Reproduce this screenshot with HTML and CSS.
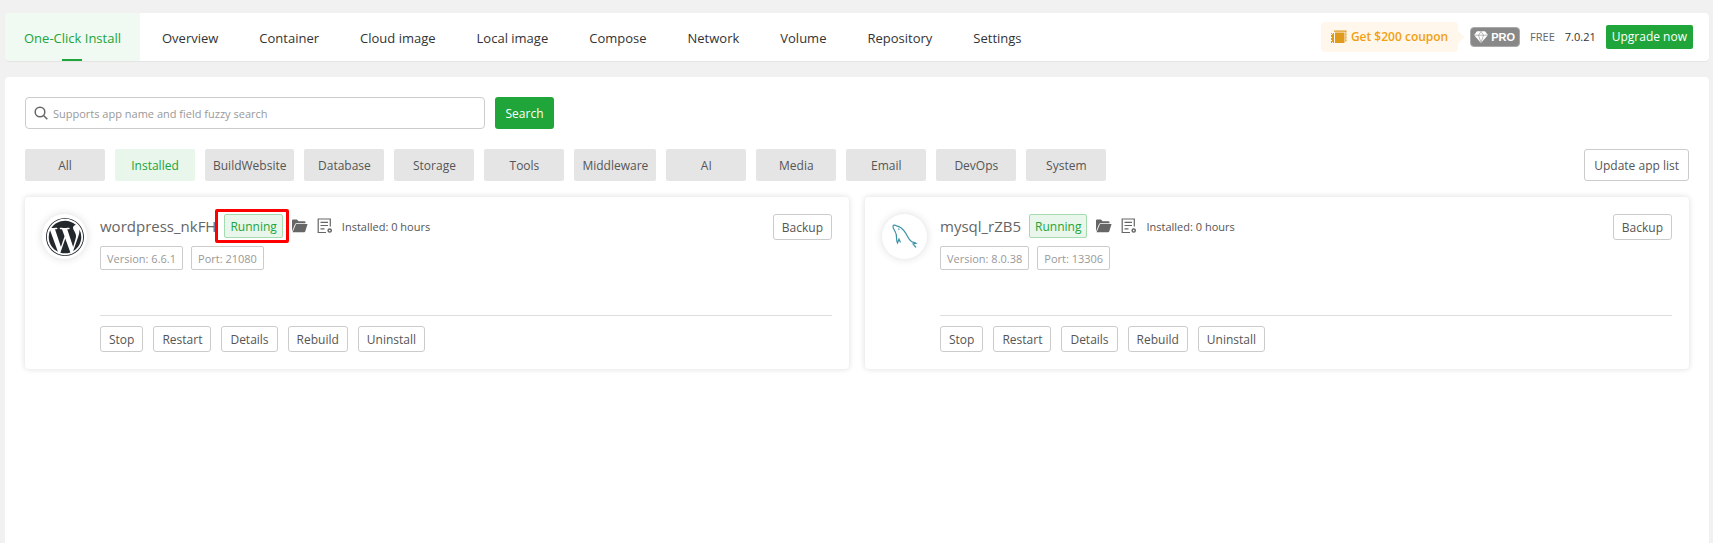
FILE: index.html
```html
<!DOCTYPE html>
<html lang="en">
<head>
<meta charset="utf-8">
<title>One-Click Install</title>
<link rel="stylesheet" href="styles.css">
</head>
<body>
<svg class="sprite" aria-hidden="true">
  <symbol id="folder" viewBox="0 0 16 14">
    <path d="M0 1.500Q0 .5 1 .5h4l1.500 1.800H12.500q1 0 1 1V4.300H3.800L0 10z"/>
    <path d="M4 5H15.600L13.200 12.600Q12.900 13.300 12.200 13.300H.6z"/>
    <path d="M0 8v4.500l2.500-6z"/>
  </symbol>
  <symbol id="log" viewBox="0 0 16 16">
    <path d="M13.300 8.500V1H1.200v13.500H9M3.500 4.300h7.500M3.500 7.500h7.500M3.500 10.800h4" fill="none" stroke="currentColor" stroke-width="1.200"/>
    <circle cx="12.700" cy="12.500" r="1.600" fill="none" stroke="currentColor" stroke-width="1.500"/>
  </symbol>
</svg>
<header class="topbar">
  <nav class="tabs">
    <a class="tab tab-active" href="#">One-Click Install</a>
    <a class="tab" href="#">Overview</a>
    <a class="tab" href="#">Container</a>
    <a class="tab" href="#">Cloud image</a>
    <a class="tab" href="#">Local image</a>
    <a class="tab" href="#">Compose</a>
    <a class="tab" href="#">Network</a>
    <a class="tab" href="#">Volume</a>
    <a class="tab" href="#">Repository</a>
    <a class="tab" href="#">Settings</a>
  </nav>
  <div class="account">
    <a class="coupon" href="#">
      <svg width="16" height="14" viewBox="0 0 16 14" fill="#e09a1c" aria-hidden="true">
        <path d="M4 2.500h9.500V13H4zM0 3h1v1h1V3h1v10H2v-1H1v1H0v-2h1v-1H0V8h1V7H0V5h1V4H0z"/>
        <path d="M3 .5h12.500v2h-.8v1h.8v2h-.8v1h.8v2h-.8v1h.8v2h-1.200V1.700H3z"/>
      </svg>
      Get $200 coupon
    </a>
    <span class="pro">
      <svg width="14" height="12" viewBox="0 0 14 12" aria-hidden="true">
        <path d="M3 .3h8L14 4 7 12 0 4z" fill="#fff"/>
        <path d="M0 4.200h14M4.500 4.200L7 11.500l2.500-7.300M4.500 4.200L7 .5l2.500 3.700" fill="none" stroke="#888" stroke-width=".6"/>
      </svg>
      PRO
    </span>
    <span class="plan">FREE</span>
    <span class="version">7.0.21</span>
    <button class="upgrade" type="button">Upgrade now</button>
  </div>
</header>
<main class="panel">
  <form class="search">
    <label class="search-box">
      <svg width="14" height="14" viewBox="0 0 14 14" fill="none" stroke="#666" stroke-width="1.500" aria-hidden="true"><circle cx="6" cy="6" r="4.800"/><path d="M9.500 9.500L13.300 13.300"/></svg>
      <input type="text" aria-label="Search apps" placeholder="Supports app name and field fuzzy search">
    </label>
    <button class="search-button" type="button">Search</button>
  </form>
  <div class="filters">
    <div class="categories">
      <button class="category" type="button">All</button>
      <button class="category category-active" type="button">Installed</button>
      <button class="category" type="button">BuildWebsite</button>
      <button class="category" type="button">Database</button>
      <button class="category" type="button">Storage</button>
      <button class="category" type="button">Tools</button>
      <button class="category" type="button">Middleware</button>
      <button class="category" type="button">AI</button>
      <button class="category" type="button">Media</button>
      <button class="category" type="button">Email</button>
      <button class="category" type="button">DevOps</button>
      <button class="category" type="button">System</button>
    </div>
    <button class="button button-large" type="button">Update app list</button>
  </div>
  <div class="cards">
    <article class="card">
      <div class="logo">
        <svg width="38" height="38" viewBox="0 0 122.520 122.523" fill="#23282d" role="img" aria-label="WordPress"><path d="M8.708 61.260c0 20.802 12.089 38.779 29.619 47.298L13.258 39.872a52.354 52.354 0 0 0-4.550 21.388zM96.740 58.608c0-6.495-2.333-10.993-4.334-14.494-2.664-4.329-5.161-7.995-5.161-12.324 0-4.831 3.664-9.328 8.825-9.328.233 0 .454.029.681.042-9.350-8.566-21.807-13.796-35.489-13.796-18.360 0-34.513 9.420-43.910 23.688 1.233.037 2.395.063 3.382.063 5.497 0 14.006-.667 14.006-.667 2.833-.167 3.167 3.994.337 4.329 0 0-2.847.335-6.015.501L48.200 93.547l11.501-34.493-8.188-22.434c-2.830-.166-5.511-.501-5.511-.501-2.832-.166-2.500-4.496.332-4.329 0 0 8.679.667 13.843.667 5.496 0 14.006-.667 14.006-.667 2.835-.167 3.168 3.994.337 4.329 0 0-2.853.335-6.015.501l18.992 56.494 5.242-17.517c2.272-7.269 4.001-12.490 4.001-16.989z"/><path d="M62.184 65.857l-15.768 45.819a52.552 52.552 0 0 0 32.290-.838 4.693 4.693 0 0 1-.374-.724zM107.376 36.046c.226 1.674.354 3.471.354 5.404 0 5.333-.996 11.328-3.996 18.824l-16.053 46.413c15.624-9.111 26.133-26.038 26.133-45.426a52.275 52.275 0 0 0-6.438-25.215z"/><path d="M61.262 0C27.483 0 0 27.481 0 61.260c0 33.783 27.483 61.263 61.262 61.263 33.778 0 61.265-27.480 61.265-61.263C122.526 27.481 95.040 0 61.262 0zm0 119.715c-32.230 0-58.453-26.223-58.453-58.455 0-32.230 26.222-58.451 58.453-58.451 32.229 0 58.450 26.221 58.450 58.451 0 32.232-26.221 58.455-58.450 58.455z"/></svg>
      </div>
      <div class="card-body">
        <div class="heading">
          <h2 class="name">wordpress_nkFH</h2>
          <span class="status status-marked">Running</span>
          <a class="icon-link" href="#" aria-label="Open folder"><svg width="16" height="14"><use href="#folder"/></svg></a>
          <a class="icon-link" href="#" aria-label="View log"><svg width="16" height="16"><use href="#log"/></svg></a>
          <span class="age">Installed: 0 hours</span>
          <button class="button backup" type="button">Backup</button>
        </div>
        <div class="tags"><span class="tag">Version: 6.6.1</span><span class="tag">Port: 21080</span></div>
        <div class="actions">
          <button class="button" type="button">Stop</button>
          <button class="button" type="button">Restart</button>
          <button class="button" type="button">Details</button>
          <button class="button" type="button">Rebuild</button>
          <button class="button" type="button">Uninstall</button>
        </div>
      </div>
    </article>
    <article class="card">
      <div class="logo">
        <svg width="38" height="38" viewBox="0 0 38 38" fill="none" stroke="#3d91a6" stroke-width="1.200" role="img" aria-label="MySQL"><path d="M14.500 24.500L13 21l-1.500 4C10 22 10.800 19 10.200 16.500 9.700 13.500 7.500 11.500 7 9 6.500 7 8.500 6.500 10.500 7.800c4 .7 6.500 3.200 9 7 2 3.500 3 6.700 6 8.700 1.500.8 3 1 4.500 1.800L27 26c1 1.500 2 2 3 3.500"/><path d="M12.300 10.700l1 1"/></svg>
      </div>
      <div class="card-body">
        <div class="heading">
          <h2 class="name">mysql_rZB5</h2>
          <span class="status">Running</span>
          <a class="icon-link" href="#" aria-label="Open folder"><svg width="16" height="14"><use href="#folder"/></svg></a>
          <a class="icon-link" href="#" aria-label="View log"><svg width="16" height="16"><use href="#log"/></svg></a>
          <span class="age">Installed: 0 hours</span>
          <button class="button backup" type="button">Backup</button>
        </div>
        <div class="tags"><span class="tag">Version: 8.0.38</span><span class="tag">Port: 13306</span></div>
        <div class="actions">
          <button class="button" type="button">Stop</button>
          <button class="button" type="button">Restart</button>
          <button class="button" type="button">Details</button>
          <button class="button" type="button">Rebuild</button>
          <button class="button" type="button">Uninstall</button>
        </div>
      </div>
    </article>
  </div>
</main>
</body>
</html>
```
FILE: styles.css
```css
* {
  box-sizing: border-box;
}

body {
  display: flex;
  flex-direction: column;
  gap: 16px;
  min-height: 100vh;
  margin: 0;
  padding: 13px 4px 0 5px;
  background: #f1f1f1;
  color: #555;
  font: 12px/16px "Open Sans", "Noto Sans", sans-serif;
}

a {
  color: inherit;
  text-decoration: none;
}

button,
input {
  font: inherit;
  color: inherit;
}

button {
  cursor: pointer;
  white-space: nowrap;
}

svg {
  flex: none;
}

.sprite {
  position: absolute;
  width: 0;
  height: 0;
}

.topbar {
  display: flex;
  align-items: center;
  justify-content: space-between;
  height: 48px;
  padding-right: 16px;
  border-radius: 4px;
  background: #fff;
  box-shadow: 0 1px 1px #e4e4e4;
}

.tabs {
  display: flex;
  gap: 3px;
  height: 100%;
}

.tab {
  display: flex;
  flex-direction: column;
  justify-content: center;
  padding: 2px 19px 0;
  color: #333;
  font-size: 13px;
  white-space: nowrap;
}

.tab-active {
  position: relative;
  border-radius: 4px 0 0 4px;
  background: #f0f9f2;
  color: #20a53a;
}

.tab-active::after {
  content: "";
  position: absolute;
  bottom: 0;
  left: calc(50% - 10px);
  width: 20px;
  height: 2px;
  background: #20a53a;
}

.account {
  display: flex;
  align-items: center;
  gap: 10px;
  white-space: nowrap;
}

.coupon {
  position: relative;
  display: flex;
  align-items: center;
  gap: 4px;
  height: 30px;
  margin-right: 2px;
  padding: 0 10px;
  border-radius: 4px;
  background: #fff7eb;
  color: #f0a010;
  font-weight: 600;
}

.coupon::after {
  content: "";
  position: absolute;
  top: 9px;
  left: 100%;
  border: 6px solid transparent;
  border-left: 7px solid #fff7eb;
  border-right: 0;
}

.pro {
  display: flex;
  align-items: center;
  gap: 3px;
  height: 20px;
  padding: 0 4px 0 3px;
  border: 1px solid #aaa;
  border-radius: 4px;
  background: #888;
  color: #fff;
  font: 600 11px/16px "Liberation Sans", sans-serif;
}

.plan {
  color: #666;
  font-size: 11px;
}

.version {
  color: #333;
  font-size: 11px;
}

.upgrade {
  height: 24px;
  padding: 0 6px;
  border: 0;
  border-radius: 2px;
  background: #20a53a;
  color: #fff;
  font-weight: 500;
}

.panel {
  flex: 1;
  padding: 20px;
  border-radius: 4px 4px 0 0;
  background: #fff;
}

.search {
  display: flex;
  gap: 10px;
}

.search-box {
  display: flex;
  align-items: center;
  gap: 5px;
  width: 460px;
  height: 32px;
  padding: 0 8px;
  border: 1px solid #ccc;
  border-radius: 4px;
}

.search-box input {
  flex: 1;
  min-width: 0;
  padding: 2px 0 0;
  border: 0;
  outline: 0;
  background: none;
  font-size: 11px;
}

.search-box input::placeholder {
  color: #999;
}

.search-button {
  min-width: 59px;
  height: 32px;
  padding: 2px 8px 0;
  border: 0;
  border-radius: 3px;
  background: #20a53a;
  color: #fff;
}

.filters {
  display: flex;
  justify-content: space-between;
  margin: 20px 0 16px;
}

.categories {
  display: flex;
  gap: 10px;
}

.category {
  min-width: 80px;
  height: 32px;
  padding: 2px 8px 0;
  border: 0;
  border-radius: 2px;
  background: #e5e5e5;
}

.category-active {
  background: #e8f6eb;
  color: #20a53a;
}

.button {
  height: 26px;
  padding: 2px 8px 0;
  border: 1px solid #ccc;
  border-radius: 3px;
  background: #fff;
}

.button-large {
  height: 32px;
  padding: 2px 9px 0;
}

.cards {
  display: grid;
  grid-template-columns: 1fr 1fr;
  gap: 16px;
}

.card {
  display: flex;
  gap: 13px;
  padding: 17px;
  border-radius: 4px;
  box-shadow: 0 0 6px rgba(0, 0, 0, 0.14);
}

.logo {
  display: flex;
  flex: none;
  align-items: center;
  justify-content: center;
  width: 45px;
  height: 45px;
  border-radius: 50%;
  box-shadow: 0 0 8px rgba(0, 0, 0, 0.14);
}

.card-body {
  flex: 1;
  min-width: 0;
}

.heading {
  display: flex;
  align-items: center;
  height: 24px;
}

.name {
  margin: 0;
  color: #666;
  font-size: 15px;
  font-weight: 400;
}

.status {
  position: relative;
  margin: 0 9px 0 8px;
  padding: 4px 5px 2px;
  border: 1px solid #a6dbb0;
  border-radius: 2px;
  background: #e8f6eb;
  color: #20a53a;
}

.status-marked::after {
  content: "";
  position: absolute;
  inset: -6px -7px -6px -10px;
  border: 3px solid #f00;
  border-radius: 2px;
}

.icon-link {
  display: flex;
  margin-right: 9px;
  color: #666;
  fill: currentColor;
}

.age {
  padding-top: 2px;
  font-size: 11px;
}

.backup {
  align-self: flex-start;
  margin-left: auto;
}

.tags {
  display: flex;
  gap: 8px;
  margin-top: 8px;
}

.tag {
  padding: 4px 6px 2px;
  border: 1px solid #ccc;
  border-radius: 2px;
  color: #999;
  font-size: 11px;
}

.actions {
  display: flex;
  gap: 10px;
  margin-top: 45px;
  padding-top: 10px;
  border-top: 1px solid #ddd;
}
```
